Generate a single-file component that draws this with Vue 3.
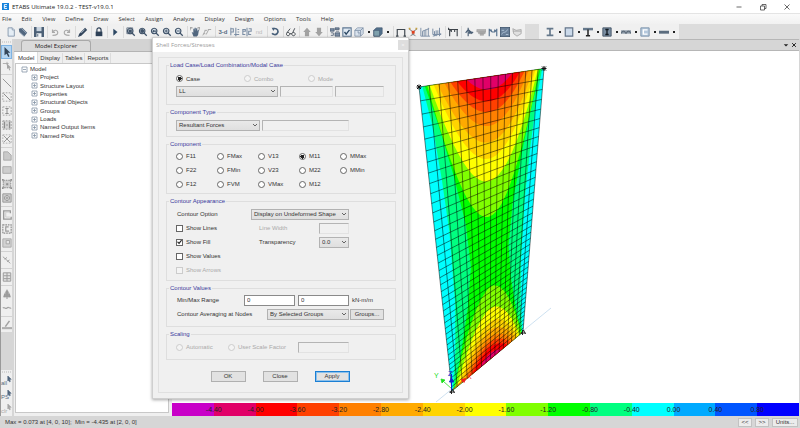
<script setup>
import { ref } from 'vue'

const menus = ['File', 'Edit', 'View', 'Define', 'Draw', 'Select', 'Assign', 'Analyze', 'Display', 'Design', 'Options', 'Tools', 'Help']

const navy = '#3f5268'
const mid = '#7d8fa6'
const grey = '#a9a9a9'

// Each icon is a list of [path, fill, stroke, stroke width] on a 12x12 grid.
const lens = ['M5 1.5a3.3 3.3 0 1 0 .01 0zM7.5 7.5l3 3', '#dfe8f0', navy, 1.4]
const icons = {
  new: [['M2.5 1h5l2.500 2.500v7.500h-7.500z', '#e4edf5', mid, 1], ['M7.500 1v2.500h2.500', '#fff', mid, 1]],
  open: [['M1 2l4-1 6 6-3.500 4.500-6-5.500z', '#52677f', 'none', 0], ['M2 6.500l5.500 5M4 1.500l6 6', 'none', '#9fb0c1', 1]],
  save: [['M0 0h12v12h-12z', '#4c6076', 'none', 0], ['M3 0h6v5h-6z', '#c9d4df', 'none', 0], ['M3 7.500h6v4.500h-6z', '#eef2f5', 'none', 0], ['M4.500 8.500v3', 'none', navy, 1]],
  undo: [['M3 10c6 0 7-2 6-4.500s-4-2-6 .5M3 3v3.500h3', 'none', grey, 1.4]],
  redo: [['M9 10c-6 0-7-2-6-4.500s4-2 6 .5M9 3v3.500h-3', 'none', grey, 1.4]],
  pen: [['M0 12l1.500-4 7-7 2.500 2.500-7 7z', '#33465c', 'none', 0], ['M4 7l4-4', 'none', '#c4d3e2', 1]],
  lock: [['M2 5.500h8v5.500h-8z', '#2e4157', 'none', 0], ['M3.500 6v-2.500a2.500 2.500 0 0 1 5 0v2.500', 'none', '#2e4157', 1.4]],
  play: [['M4 2l5 4-5 4.500z', '#2d4864', 'none', 0]],
  zoomBox: [['M1 1h7v7h-7z', 'none', navy, 0.8], lens, ['M3 3h4v4h-4z', navy, 'none', 0]],
  zoomAll: [lens, ['M5 2.500a2.300 2.300 0 1 0 .01 0z', navy, 'none', 0]],
  zoomPrev: [lens, ['M2.500 5l2.500-2v1.300h2.500v1.500h-2.500v1.200z', navy, 'none', 0]],
  zoomIn: [lens, ['M3 4.800h4M5 2.800v4', 'none', navy, 1.1]],
  zoomOut: [lens, ['M3 4.800h4', 'none', navy, 1.1]],
  hand: [['M0 1h3M0 1v3M12 1h-3M12 1v3', 'none', '#777', 1], ['M2 6l2 1v-5h1.200v3l.4-4h1.300v4l.6-3.500h1.200v4l1-2.500 1 .5-1 6-1.500 2h-4z', '#52677f', 'none', 0]],
  wand: [['M1 10l3-6M5 9l3-6M3 4h3M7 3h4M2 8h2', 'none', grey, 1.2]],
  plan: [['M1 1v9M1 2h3v4h-3M7 1v10M9 3h2M9 6h2M9 9h2M5 9h6', 'none', mid, 1.3]],
  elev: [['M1 5h3v-2h-3v6h3M6 1v10M8 2h3v3h-3v4h3', 'none', mid, 1.3]],
  rotate: [['M4 2c5-1 7 3 4.500 6-2 2-5 1-6-.5', 'none', '#48607a', 2], ['M2 1l4 .2-2 3.500z', '#48607a', 'none', 0]],
  glasses: [['M2.500 6.500a2 2 0 1 0 .01 0zM9 6.500a2 2 0 1 0 .01 0zM1 7l4-5M8 7l2.500-5.500M4.500 8h2.500', 'none', '#40464d', 1.1]],
  up: [['M6 1l4.500 5h-2v5h-5v-5h-2z', '#a2a2a2', 'none', 0]],
  down: [['M6 11l4.500-5h-2v-5h-5v5h-2z', '#a2a2a2', 'none', 0]],
  assign: [['M0 2h5v3h-5zM6 1h5v2h-5zM6 7h6v4h-6z', mid, navy, 0.8], ['M1 7h3v3h-3M7 5h4', 'none', navy, 0.9]],
  check: [['M1 1h10v10h-10z', '#dfe9f3', '#5f7893', 1.3], ['M3 6l2 2.500 4-5', 'none', '#2b4763', 1.6]],
  cube: [['M1 4l3-3h7v7l-3 3h-7z', '#dbe4ee', mid, 0.9], ['M1 4h7v7M8 4l3-3M4 6h2v3', 'none', mid, 1.1]],
  cubeFill: [['M1 4l3-3h7v7l-3 3h-7z', '#54728d', '#42586f', 0.8], ['M1 4h7v7h-7z', '#7fa1ad', '#42586f', 0.8]],
  portal: [['M1.500 11v-8h9v8M0 11h3M9 11h3', 'none', '#3f474f', 1.4]],
  node: [['M1 2l5 4 5-4M6 5v5M3 11l3-3 3 3', 'none', '#6f6a6c', 1.1], ['M4.500 4.500h3.500v3.500h-3.500z', '#e0401c', 'none', 0], ['M1 1h2v2h-2zM9 1h2v2h-2z', '#c8a23c', 'none', 0]],
  chart: [['M1 1v10h11M3 5v6M5 4v7M7 3v8M10 1v10M3 5l8-3', 'none', mid, 1.1]],
  chart2: [['M1 2v7h10M3 5v6M5 4v7M7 4v5M9 1v10M1 11l10-3', 'none', mid, 1.2]],
  frame: [['M2 11v-8h9v8M0 3h12M0 1l3 4M4 3v3M8 3v3', 'none', '#3c4248', 1.3]],
  walk: [['M5 1v10M2 7l3-4M5 3l4 4h-4M8 8l3-2', 'none', '#4c6076', 1.4], ['M6 4l4 2-4 2z', '#4c6076', 'none', 0]],
  ddd: [['M1 3h11v3h-11zM3 6h8v2h-8zM5 8h4v2h-4z', '#b1b1b1', '#9b9b9b', 0.6]],
  moment: [['M1.500 11v-9M10.500 11v-9M2 3l3 3h3l3-3M4 3v3M8 3v3', 'none', '#5a7490', 1.4]],
  shell: [['M0 0h12v12h-12z', '#697f98', '#33465a', 1], ['M2 9c2-5 4 0 7-6M2 4h3M7 9h3', 'none', '#a9bed2', 1.2]],
  bowl: [['M1 2l4 2 6-1v5l-5 3-4-3zM1 5l10 0', '#e0e0e0', '#a6a6a6', 1]],
  ibeam: [['M2 1h8v2h-3v6h3v2h-8v-2h3v-6h-3z', '#65788b', 'none', 0]],
  rect: [['M1.500 1h9v10h-9z', '#ccdaea', '#64758a', 1.4]],
  tee: [['M0 1h12v3h-12z', '#66798c', 'none', 0], ['M6 3v7M3.500 10.500h5', 'none', '#222', 1.8]],
  iencased: [['M1 1h10v10h-10z', '#7a8da1', '#3d4e60', 1], ['M4 3h4M6 3v6M4 9h4', 'none', '#121a22', 1.6]],
  deck: [['M0 4h12v4h-12z', '#8b98a6', 'none', 0], ['M0 8l2-3h2l2 3 2-3h2l2 3', 'none', '#4b5865', 1]],
  channel: [['M1 1h10v10h-10z', '#b6c9dd', '#728aa4', 1], ['M9 3.500h-5v5h5', 'none', '#fff', 1.6]],
  bar: [['M0 4.500h12v3.500h-12z', '#5b6c7e', 'none', 0]],
  pointer: [['M3 0l7 7h-3l2 4-1.500 1-2-4-2.500 2z', '#34465a', 'none', 0]],
  reshape: [['M1 3h7M6 1v4', 'none', '#a4a4a4', 1], ['M6 3l5 5h-2l1 3-1 .5-1.500-3-1.500 1z', '#a4a4a4', 'none', 0]],
  line: [['M1 1l10 10', 'none', '#999', 1.2]],
  braceBox: [['M1 1h10v10h-10z', 'none', '#a8a8a8', 1.2, '2 1.500'], ['M2 2l8 8', 'none', '#8d8d8d', 1.2]],
  colBox: [['M1 1h10v10h-10z', 'none', '#a8a8a8', 1.2, '2 1.500'], ['M4 3h4M6 3v6M4 9h4', 'none', '#8d8d8d', 1.2]],
  secBox: [['M1 1h10v10h-10z', '#d4d4d4', '#9c9c9c', 1.2, '2 1.500'], ['M3 2v8M9 2v8M5 6h2', 'none', '#8d8d8d', 1.3]],
  xBox: [['M1 1h10v10h-10z', 'none', '#b2b2b2', 1.2, '2 1.500'], ['M2 2l8 8M10 2l-8 8', 'none', '#999', 1.2]],
  poly: [['M2 1h5l4 4v6h-9z', '#c9c9c9', '#a3a3a3', 1]],
  slab: [['M1 2h10v8h-10z', '#cdcdcd', '#a3a3a3', 1]],
  dotBox: [['M1.500 1.500h9v9h-9z', '#cfcfcf', '#8f8f8f', 1.2, '2 1'], ['M5 5h2.500v2.500h-2.500zM0 0h2v2h-2zM10 0h2v2h-2zM0 10h2v2h-2zM10 10h2v2h-2z', '#8f8f8f', 'none', 0]],
  ringBox: [['M1 1h10v10h-10z', '#cfcfcf', '#8f8f8f', 1], ['M6 3a3 3 0 1 0 .01 0zM5.500 5.500h1v1h-1z', 'none', '#8f8f8f', 1]],
  wall: [['M10 4v-3h-8v10h9v-3', 'none', '#9a9a9a', 1.6], ['M9 2.500h-4.500v6h5', 'none', '#c6c6c6', 1]],
  wallBox: [['M1 1h10v10h-10z', 'none', '#8f8f8f', 1.4, '2 1'], ['M8 3.500h-3.500v5h4', 'none', '#9a9a9a', 1.4]],
  hole: [['M1 1h10v10h-10z', '#d2d2d2', '#a6a6a6', 1], ['M5 3h4v4h-4z', '#e6e6e6', '#a0a0a0', 1]],
  dim: [['M1 2l9 8M3 5l3-2M6 8l3-2', 'none', '#a3a3a3', 1.2]],
  grid: [['M1.500 1h9v10h-9z', '#e4e4e4', '#9c9c9c', 1.2], ['M6 1v10M2 4.500h8M2 8h8', 'none', '#9c9c9c', 1.2]],
  tower: [['M6 0l3 5 2 5h-10l2-5z', '#adadad', 'none', 0], ['M6 2v10M3.500 6v4M8.500 6v4', 'none', '#888', 1]],
  wave: [['M1 6c2-2 3 2 5 0s3 1 5 0', 'none', '#a5a5a5', 1.5]],
  pencil: [['M4 8l5-7', 'none', '#a0a0a0', 1.8], ['M0 8.500h12v2.500h-12z', '#b0b0b0', 'none', 0]],
  cursorSmall: [['M7 0l4 4h-2l1 2.500-1 .5-1-2-1 1z', '#52677f', '#52677f', 0.8]],
  cursorFaint: [['M7 0l4 4h-2l1 2.500-1 .5-1-2-1 1z', '#a6a6a6', '#a6a6a6', 0.8]],
}

const toolGroups = [
  ['new', 'open'], ['save'], ['undo', 'redo'], ['pen'], ['lock'], ['play'],
  ['zoomBox', 'zoomAll', 'zoomPrev', 'zoomIn', 'zoomOut'], ['hand', 'wand'],
  ['text:3-d', 'plan', 'elev', 'faint:nd'], ['rotate'], ['glasses'], ['up', 'down'],
  ['assign', 'check', 'cube', 'more', 'cubeFill', 'more'],
  ['portal', 'node', 'chart', 'chart2'], ['frame'], ['walk', 'ddd', 'moment', 'shell', 'bowl'],
]
const sectionTools = ['ibeam', 'rect', 'tee', 'iencased', 'deck', 'channel', 'bar']
const sideGroups = [
  ['pointer', 'reshape'], ['line', 'braceBox', 'colBox', 'secBox', 'xBox'],
  ['poly', 'slab', 'dotBox', 'ringBox'], ['wall', 'wallBox', 'hole'], ['dim'], ['grid'], ['tower', 'wave'], ['pencil'],
]
const selectTools = [['all', 'cursorSmall'], ['PS', 'cursorSmall'], ['clr', 'cursorFaint']]

const explorerTabs = ['Model', 'Display', 'Tables', 'Reports']
const tree = ['Project', 'Structure Layout', 'Properties', 'Structural Objects', 'Groups', 'Loads', 'Named Output Items', 'Named Plots']

const loadKind = ref('Case')
const component = ref('M11')
const components = ['F11', 'FMax', 'V13', 'M11', 'MMax', 'F22', 'FMin', 'V23', 'M22', 'MMin', 'F12', 'FVM', 'VMax', 'M12']
const showLines = ref(false)
const showFill = ref(true)
const showValues = ref(false)
const minRange = ref('0')
const maxRange = ref('0')

const palette = ['#c800c8', '#e10068', '#ff0000', '#ff4000', '#ff8000', '#ffaa00', '#ffd400', '#ffff00', '#80ff00', '#00ff00', '#00ff80', '#00ffff', '#00aaff', '#0055ff', '#0000ff']
const legend = palette.map((color, i) => ({ color, label: i ? (-4.4 + (i - 1) * 0.4).toFixed(2).replace('-0.00', '0.00') : '' }))

// Perspective projection of the plate: u runs across it, v from top to bottom.
const corners = [[419, 87], [544, 68.5], [523, 332], [452, 391]]
const [[x0, y0], [x1, y1], [x2, y2], [x3, y3]] = corners
const dx1 = x1 - x2, dx2 = x3 - x2, sx = x0 - x1 + x2 - x3
const dy1 = y1 - y2, dy2 = y3 - y2, sy = y0 - y1 + y2 - y3
const den = dx1 * dy2 - dx2 * dy1
const g = (sx * dy2 - dx2 * sy) / den
const h = (dx1 * sy - sx * dy1) / den
const project = (u, v) => {
  const w = 1 + g * u + h * v
  return [
    ((x0 + (x1 - x0 + g * x1) * u + (x3 - x0 + h * x3) * v) / w).toFixed(2),
    ((y0 + (y1 - y0 + g * y1) * u + (y3 - y0 + h * y3) * v) / w).toFixed(2),
  ].join(' ')
}
const toPath = (pts) => 'M' + pts.map(([u, v]) => project(u, v)).join('L') + 'Z'

// Side bands follow a table of edge distance by height.
const lerp = (table, v) => {
  for (let i = 1; i < table.length; i++) {
    const [a, p] = table[i - 1]
    const [b, q] = table[i]
    if (v <= b) return p + ((q - p) * (v - a)) / (b - a)
  }
  return table[table.length - 1][1]
}
const strip = (table) => {
  const left = [], right = []
  for (let i = 0; i <= 40; i++) {
    const v = i / 40
    const e = lerp(table, v)
    left.push([e, v])
    right.unshift([1 - e, v])
  }
  return toPath(left.concat(right))
}
const bell = (half, depth, power, bottom) => {
  const pts = []
  for (let i = 0; i <= 32; i++) {
    const t = (i / 16) - 1
    const d = depth * (1 - Math.pow(Math.abs(t), power))
    pts.push([0.5 + t * half, bottom ? 1 - d : d])
  }
  return toPath(pts)
}

const bands = [
  { d: toPath([[0, 0], [1, 0], [1, 1], [0, 1]]), color: palette[11] },
  { d: strip([[0, 0.02], [0.08, 0.06], [0.2, 0.09], [0.35, 0.115], [0.6, 0.115], [0.8, 0.08], [1, 0.01]]), color: palette[10] },
  { d: strip([[0, 0.035], [0.08, 0.1], [0.2, 0.18], [0.35, 0.26], [0.5, 0.29], [0.65, 0.24], [0.85, 0.13], [1, 0.02]]), color: palette[9] },
  ...[
    [0.45, 0.36, 2, 0.47, 0.374], [0.435, 0.252, 2, 0.44, 0.275], [0.41, 0.19, 2, 0.41, 0.21],
    [0.385, 0.148, 2, 0.38, 0.165], [0.34, 0.108, 2, 0.34, 0.128], [0.3, 0.076, 2, 0.3, 0.1],
    [0.255, 0.052, 2, 0.25, 0.073], [0.185, 0.027, 2, 0.16, 0.036],
  ].flatMap(([a, b, p, c, d], i) => [
    { d: bell(a, b, p, false), color: palette[8 - i] },
    { d: bell(c, d, 1.8, true), color: palette[8 - i] },
  ]),
]

let meshPath = ''
for (let i = 0; i <= 16; i++) meshPath += `M${project(i / 16, 0)}L${project(i / 16, 1)}`
for (let j = 0; j <= 40; j++) meshPath += `M${project(0, j / 40)}L${project(1, j / 40)}`
</script>

<template>
  <div class="app">
    <header class="titlebar">
      <svg class="logo" viewBox="0 0 9 9" aria-hidden="true"><path d="M0 0h9v9H0z" fill="#1583dd" /><path d="M6.500 2H3v5h3.500M3 4.500h3" fill="none" stroke="#fff" stroke-width="1.200" /></svg>
      <h1>ETABS Ultimate 19.0.2 - TEST-v19.0.1</h1>
      <div class="window-buttons">
        <button aria-label="Minimize"><svg viewBox="0 0 8 8"><path d="M1.500 4h5" /></svg></button>
        <button aria-label="Restore"><svg viewBox="0 0 8 8"><path d="M1.500 3h4v4h-4zM3 3V1.500h4v4H5.500" /></svg></button>
        <button aria-label="Close"><svg viewBox="0 0 8 8"><path d="M1.500 1.500l5 5M6.500 1.500l-5 5" /></svg></button>
      </div>
    </header>

    <nav class="menubar">
      <button v-for="m in menus" :key="m">{{ m }}</button>
    </nav>

    <div class="toolbars">
      <div class="toolbar">
        <div v-for="(group, gi) in toolGroups" :key="gi" class="tool-group">
          <template v-for="(name, i) in group" :key="i">
            <button v-if="name === 'more'" class="more" aria-label="More"></button>
            <button v-else-if="name.includes(':')" class="tool word" :class="{ faint: name.startsWith('faint') }">{{ name.split(':')[1] }}</button>
            <button v-else class="tool" :aria-label="name">
              <svg viewBox="0 0 12 12"><path v-for="(p, k) in icons[name]" :key="k" :d="p[0]" :fill="p[1]" :stroke="p[2]" :stroke-width="p[3]" /></svg>
            </button>
          </template>
        </div>
      </div>
      <div class="toolbar sections">
        <template v-for="name in sectionTools" :key="name">
          <button class="tool" :aria-label="name">
            <svg viewBox="0 0 12 12"><path v-for="(p, k) in icons[name]" :key="k" :d="p[0]" :fill="p[1]" :stroke="p[2]" :stroke-width="p[3]" /></svg>
          </button>
          <button class="more" aria-label="More"></button>
        </template>
      </div>
    </div>

    <div class="workspace">
      <aside class="side">
        <div class="side-tools">
          <div class="grip"></div>
          <div v-for="(group, gi) in sideGroups" :key="gi" class="side-group">
            <button v-for="name in group" :key="name" class="side-tool" :class="{ active: name === 'pointer' }" :aria-label="name">
              <svg viewBox="0 0 12 12"><path v-for="(p, k) in icons[name]" :key="k" :d="p[0]" :fill="p[1]" :stroke="p[2]" :stroke-width="p[3]" :stroke-dasharray="p[4]" /></svg>
            </button>
          </div>
        </div>
        <div class="side-tools">
          <div class="grip small"></div>
          <button v-for="[word, icon] in selectTools" :key="word" class="side-tool stacked" :class="{ faint: word === 'clr' }">
            <svg viewBox="0 0 12 12"><path v-for="(p, k) in icons[icon]" :key="k" :d="p[0]" :fill="p[1]" :stroke="p[2]" :stroke-width="p[3]" /></svg>
            <span>{{ word }}</span>
          </button>
        </div>
      </aside>

      <section class="explorer">
        <div class="explorer-head"><h2>Model Explorer</h2></div>
        <div class="tabs">
          <button v-for="(t, i) in explorerTabs" :key="t" :class="{ active: i === 0 }">{{ t }}</button>
        </div>
        <div class="tree">
          <div class="node root"><svg viewBox="0 0 7 7"><path d="M1 1h5v5H1zM2 3.500h3" /></svg><span>Model</span></div>
          <ul>
            <li v-for="n in tree" :key="n" class="node"><svg viewBox="0 0 7 7"><path d="M1 1h5v5H1zM2 3.500h3M3.500 2v3" /></svg><span>{{ n }}</span></li>
          </ul>
        </div>
      </section>

      <main class="view">
        <div class="view-head">
          <button aria-label="Window list"><svg viewBox="0 0 8 8"><path d="M1 3h6L4 6z" fill="#222" /></svg></button>
          <button aria-label="Close view"><svg viewBox="0 0 8 8"><path d="M1.500 1.500l5 5M6.500 1.500l-5 5" fill="none" stroke="#222" stroke-width="1.300" /></svg></button>
        </div>
        <svg class="model" viewBox="172 51 627 352" preserveAspectRatio="xMidYMid meet" role="img" aria-label="M11 contour on shell">
          <path d="M436 402L551 308" stroke="#b8d4ea" stroke-width="0.700" />
          <path v-for="(b, i) in bands" :key="i" :d="b.d" :fill="b.color" />
          <path :d="meshPath" fill="none" stroke="#000" stroke-opacity="0.700" stroke-width="0.700" />
          <path v-for="(c, i) in corners.slice(0, 2)" :key="i" :d="`M${c[0] - 2} ${c[1] - 2}l4 4m0-4l-4 4m2-4.500v5m-2.500-2.500h5`" stroke="#111" stroke-width="1" />
          <path v-for="(c, i) in corners.slice(2)" :key="'b' + i" :d="`M${c[0] - 2} ${c[1] + 2}l2.500-4 2 4m-5-1h5m-3-3v5`" fill="none" stroke="#222" stroke-width="1" />
          <path d="M452 389l-9-8M441 379l4 1-3 3z" stroke="#20e020" stroke-width="0.800" fill="#20e020" />
          <path d="M451.500 390v-16M449.500 382l2-4 2 4z" stroke="#1020d0" stroke-width="1" fill="#1020d0" />
          <path d="M453 389l12-10M461 379.500l5-1-2 4z" stroke="#f02020" stroke-width="0.800" fill="#f02020" />
          <text x="434" y="378" fill="#20e020">Y</text>
          <text x="448" y="376" fill="#1020d0">Z</text>
          <text x="467" y="379" fill="#f02020">X</text>
        </svg>
        <div class="legend">
          <div v-for="l in legend" :key="l.color" class="swatch" :style="{ background: l.color }"><span>{{ l.label }}</span></div>
        </div>
      </main>
    </div>

    <footer class="status">
      <output>Max = 0.073 at [4, 0, 10];&nbsp; Min = -4.435 at [2, 0, 0]</output>
      <div class="status-buttons">
        <button>&lt;&lt;</button>
        <button>&gt;&gt;</button>
        <button class="units">Units...</button>
      </div>
    </footer>

    <form class="dialog" role="dialog" aria-labelledby="dialog-title" @submit.prevent>
      <div class="dialog-title">
        <h2 id="dialog-title">Shell Forces/Stresses</h2>
        <button type="button" aria-label="Close dialog">×</button>
      </div>
      <div class="dialog-body">
        <fieldset class="load">
          <legend>Load Case/Load Combination/Modal Case</legend>
          <div class="kinds">
            <label><input v-model="loadKind" type="radio" name="kind" value="Case" />Case</label>
            <label class="off"><input v-model="loadKind" type="radio" name="kind" value="Combo" disabled />Combo</label>
            <label class="off"><input v-model="loadKind" type="radio" name="kind" value="Mode" disabled />Mode</label>
          </div>
          <div class="row tight">
            <span class="select w-case"><select aria-label="Load case"><option>LL</option></select><svg viewBox="0 0 6 6"><path d="M1 2l2 2 2-2" /></svg></span>
            <input class="box w-combo" type="text" aria-label="Combination" disabled />
            <input class="box w-mode" type="text" aria-label="Mode number" disabled />
          </div>
        </fieldset>

        <fieldset class="type">
          <legend>Component Type</legend>
          <div class="row tight">
            <span class="select w-type"><select aria-label="Component type"><option>Resultant Forces</option></select><svg viewBox="0 0 6 6"><path d="M1 2l2 2 2-2" /></svg></span>
            <input class="box w-layer" type="text" aria-label="Layer" disabled />
          </div>
        </fieldset>

        <fieldset class="comp">
          <legend>Component</legend>
          <div class="radios">
            <label v-for="c in components" :key="c"><input v-model="component" type="radio" name="component" :value="c" />{{ c }}</label>
          </div>
        </fieldset>

        <fieldset class="appearance">
          <legend>Contour Appearance</legend>
          <div class="row">
            <label for="contour-option">Contour Option</label>
            <span class="select w-option push"><select id="contour-option"><option>Display on Undeformed Shape</option></select><svg viewBox="0 0 6 6"><path d="M1 2l2 2 2-2" /></svg></span>
          </div>
          <div class="options">
            <label><input v-model="showLines" type="checkbox" />Show Lines</label>
            <label class="off" for="line-width">Line Width</label>
            <input id="line-width" class="box" type="text" disabled />
            <label><input v-model="showFill" type="checkbox" />Show Fill</label>
            <label for="transparency">Transparency</label>
            <span class="select"><select id="transparency"><option>0.0</option></select><svg viewBox="0 0 6 6"><path d="M1 2l2 2 2-2" /></svg></span>
            <label class="whole"><input v-model="showValues" type="checkbox" />Show Values</label>
            <label class="whole off"><input type="checkbox" disabled />Show Arrows</label>
          </div>
        </fieldset>

        <fieldset class="values">
          <legend>Contour Values</legend>
          <div class="row">
            <label class="grow" for="min-range">Min/Max Range</label>
            <input id="min-range" v-model="minRange" class="box w-range" type="text" />
            <input v-model="maxRange" class="box w-range" type="text" aria-label="Maximum" />
            <span class="unit">kN-m/m</span>
          </div>
          <div class="row">
            <label class="grow" for="averaging">Contour Averaging at Nodes</label>
            <span class="select w-groups"><select id="averaging"><option>By Selected Groups</option></select><svg viewBox="0 0 6 6"><path d="M1 2l2 2 2-2" /></svg></span>
            <button type="button" class="btn w-btn">Groups...</button>
          </div>
        </fieldset>

        <fieldset class="scaling">
          <legend>Scaling</legend>
          <div class="row">
            <label class="off w-auto"><input type="radio" name="scale" disabled />Automatic</label>
            <label class="off grow"><input type="radio" name="scale" disabled />User Scale Factor</label>
            <input class="box w-range push" type="text" aria-label="Scale factor" disabled />
            <span class="unit"></span>
          </div>
        </fieldset>

        <div class="actions">
          <button type="button" class="btn">OK</button>
          <button type="button" class="btn">Close</button>
          <button type="submit" class="btn primary">Apply</button>
        </div>
      </div>
    </form>
  </div>
</template>

<style>
body { margin: 0; background: #d6d6d6; }
</style>

<style scoped>
* { box-sizing: border-box; }
.app {
  position: relative;
  display: flex;
  flex-direction: column;
  min-height: 100vh;
  font: 6px/8px "Liberation Sans", Arial, sans-serif;
  color: #333;
  background: #d6d6d6;
}
button, input, select { font: inherit; color: inherit; margin: 0; padding: 0; border: 0; background: none; border-radius: 0; }
h1, h2 { margin: 0; font: inherit; }
svg { display: block; }

.titlebar { display: flex; align-items: center; height: 13px; padding-left: 2px; background: #fff; font-family: "Open Sans", "Noto Sans", sans-serif; color: #222; }
.logo { width: 7px; height: 7px; }
.titlebar h1 { flex: 1; padding-left: 3px; }
.window-buttons { display: flex; gap: 16px; padding-right: 9px; }
.window-buttons svg { width: 8px; height: 8px; fill: none; stroke: #444; stroke-width: 0.800; }

.menubar { display: flex; gap: 10px; height: 11px; padding: 0 2px; background: linear-gradient(#fafafa, #f1f1f1); border-top: 1px solid #e4e4e4; font-family: "Open Sans", "Noto Sans", sans-serif; }

.toolbars { display: flex; height: 15px; gap: 14px; background: #dcdcdc; overflow: hidden; }
.toolbar { display: flex; align-items: center; padding: 0 2px 0 5px; background: #f0f0f0; }
.tool-group { display: flex; align-items: center; }
.tool-group + .tool-group { border-left: 1px solid #dadada; padding-left: 1px; margin-left: 2px; }
.tool { flex: none; width: 12px; height: 12px; }
.tool svg { width: 10px; height: 10px; margin: 1px auto; }
.word { color: #566b82; font-weight: bold; text-align: center; white-space: nowrap; }
.word.faint { color: #bbb; font-weight: normal; }
.more { flex: none; width: 7px; height: 12px; display: flex; align-items: center; justify-content: center; }
.more::before { content: ""; width: 2px; height: 2px; background: #222; }

.workspace { display: flex; flex: 1; min-height: 0; }
.side { display: flex; flex-direction: column; justify-content: space-between; width: 14px; padding-right: 2px; border-left: 1px solid #999; background: #d6d6d6; }
.side-tools { background: #efefef; }
.grip { height: 6px; background: repeating-linear-gradient(90deg, #d4d4d4 0 1px, #efefef 1px 2px) center / 9px 2px no-repeat; }
.grip.small { height: 4px; }
.side-group + .side-group { border-top: 1px solid #d2d2d2; padding-top: 1px; margin-top: 1px; }
.side-tool { display: block; width: 11px; height: 14px; }
.side-tool svg { width: 10px; height: 10px; margin: 0 auto; }
.side-tool.active { background: #b6d6f2; outline: 1px solid #7fb4e4; outline-offset: -1px; }
.stacked { display: grid; align-items: center; color: #566b82; text-align: left; }
.stacked svg, .stacked span { grid-area: 1 / 1; }
.stacked span { padding-top: 4px; line-height: 6px; }
.stacked.faint { color: #aaa; }

.explorer { display: flex; flex-direction: column; width: 155px; padding-bottom: 3px; background: #efefef; }
.explorer-head { display: flex; height: 12px; padding: 1px 7px 0; background: #d3d3d3; }
.explorer-head h2 { width: 70px; text-align: center; line-height: 11px; background: #dadada; border: 1px solid #a9a9a9; border-bottom: 0; border-radius: 3px 3px 0 0; font-family: "Open Sans", "Noto Sans", sans-serif; color: #222; }
.tabs { display: flex; align-items: flex-end; height: 12px; padding-left: 1px; border-top: 1px solid #b4b4b4; background: #efefef; }
.tabs button { height: 10px; padding: 0 2px; border-right: 1px solid #dcdcdc; }
.tabs .active { height: 11px; padding: 0 3px; background: #fff; }
.tree { flex: 1; margin-left: 1px; padding: 1px 5px; background: #fff; border: 1px solid #c8c8c8; }
.tree ul { display: grid; grid-auto-rows: 1fr; height: 67px; margin: 0 0 0 10px; padding: 0; list-style: none; }
.node { display: flex; align-items: center; gap: 2px; }
.node svg { width: 7px; height: 7px; fill: none; stroke: #8795a6; stroke-width: 0.800; }

.view { display: flex; flex-direction: column; flex: 1; min-width: 0; margin-right: 1px; background: #fff; border-left: 3px solid #efefef; }
.view-head { display: flex; justify-content: flex-end; align-items: center; gap: 2px; height: 12px; padding-right: 2px; background: #d6d6d6; border: solid #b6b6b6; border-width: 1px 0; margin-left: -3px; }
.view-head svg { width: 6px; height: 6px; }
.model { flex: 1; width: 100%; min-height: 0; }
.model text { font-size: 7px; }
.legend { display: grid; grid-template-columns: repeat(15, 1fr); height: 13px; color: #222; font-size: 7px; line-height: 13px; }
.swatch { min-width: 0; }
.swatch span { display: block; width: 20px; margin-left: -10px; position: relative; z-index: 1; text-align: center; }

.status { display: flex; justify-content: space-between; align-items: center; height: 12px; padding: 0 2px 0 5px; background: #d6d6d6; }
.status-buttons { display: flex; gap: 3px; }
.status-buttons button { width: 14px; height: 9px; line-height: 7px; background: #ececec; border: 1px solid #c2c2c2; }
.status-buttons .units { width: 26px; }

.dialog { position: absolute; z-index: 2; left: 152px; top: 37px; width: 257px; background: #f0f0f0; border: 1px solid #cfcfcf; box-shadow: 0 1px 3px rgba(0, 0, 0, 0.350); }
.dialog-title { display: flex; justify-content: space-between; align-items: center; height: 14px; padding: 0 0 0 3px; background: #fff; color: #999; font-family: "Open Sans", "Noto Sans", sans-serif; }
.dialog-title button { width: 10px; height: 10px; line-height: 10px; background: #dedede; color: #f8f8f8; }
.dialog-body { margin: 5px; padding: 3px 6px 10px 7px; border: 1px solid #e0e0e0; }
fieldset { margin: 0 0 3px; padding: 0 11px 0 9px; border: 1px solid #dedede; min-width: 0; }
legend { padding: 0 1px; margin-left: -7px; color: #3a3a9c; line-height: 8px; }
label { display: flex; align-items: center; gap: 3px; white-space: nowrap; }
.off { color: #aaa; }
.row { display: flex; align-items: center; gap: 3px; height: 14px; }
.row.tight { gap: 2px; }
.row > label:first-child:not(.w-auto) { padding-left: 1px; }
.push { margin-left: auto; }
.grow { flex: 1; }

input[type="radio"], input[type="checkbox"] { appearance: none; flex: none; width: 7px; height: 7px; border: 1px solid #666; background: #fff; }
input[type="radio"] { border-radius: 50%; }
input[type="radio"]:checked { background: radial-gradient(circle, #222 0 2px, #fff 2px); }
input[type="checkbox"] { display: grid; }
input[type="checkbox"]:checked::before { content: ""; background: #222; clip-path: polygon(0 50%, 20% 38%, 40% 62%, 84% 6%, 100% 20%, 42% 96%); }
input:disabled { border-color: #ccc; background: #f4f4f4; }
.box { height: 11px; min-width: 0; padding: 0 2px; background: #fff; border: 1px solid #8a8a8a; }
.box:disabled { background: #f0f0f0; border-color: #b4b4b4 #e2e2e2 #e2e2e2 #b4b4b4; }
.select { display: grid; align-items: center; height: 11px; }
.select select, .select svg { grid-area: 1 / 1; }
.select select { appearance: none; width: 100%; height: 11px; padding: 0 2px; background: linear-gradient(#e9e9e9, #dfdfdf); border: 1px solid #b2b2b2; }
.select svg { justify-self: end; width: 6px; height: 6px; margin-right: 2px; fill: none; stroke: #555; stroke-width: 0.900; pointer-events: none; }
.btn { height: 11px; line-height: 9px; background: #e2e2e2; border: 1px solid #b0b0b0; }
.primary { border: 1px solid #1b7fd4; outline: 1px solid #8cc0ea; outline-offset: -2px; }

.w-case { width: 103px; }
.w-combo { width: 54px; }
.w-mode { width: 49px; }
.w-type { width: 84px; }
.w-layer { width: 87px; }
.w-option { width: 98px; }
.w-groups { width: 82px; }
.w-range { width: 51px; }
.w-btn { width: 34px; margin-left: -2px; }
.unit { width: 32px; }
.w-auto { width: 49px; }

.kinds { display: grid; grid-template-columns: 68px 64px 1fr; height: 11px; margin-top: 4px; }
.load { padding-bottom: 6px; }
.type { padding-bottom: 4px; }
.type .row { margin-top: 2px; }
.radios { display: grid; grid-template-columns: repeat(5, 41px); grid-auto-rows: 14px; padding-top: 1px; }
.comp { padding-bottom: 2px; }
.appearance { padding: 0 46px 3px 9px; }
.appearance .row { margin-top: 2px; }
.options { display: grid; grid-template-columns: 83px 60px 30px; grid-auto-rows: 14px; align-items: center; }
.options .select { width: 30px; }
.whole { grid-column: 1 / -1; }
.values { padding-bottom: 5px; }
.values .row:first-of-type { margin-top: 1px; }
.scaling { padding-bottom: 5px; }
.scaling .row { margin-top: 2px; }
.actions { display: flex; justify-content: center; gap: 17px; padding: 8px 2px 0 0; }
.actions .btn { width: 35px; }
</style>
